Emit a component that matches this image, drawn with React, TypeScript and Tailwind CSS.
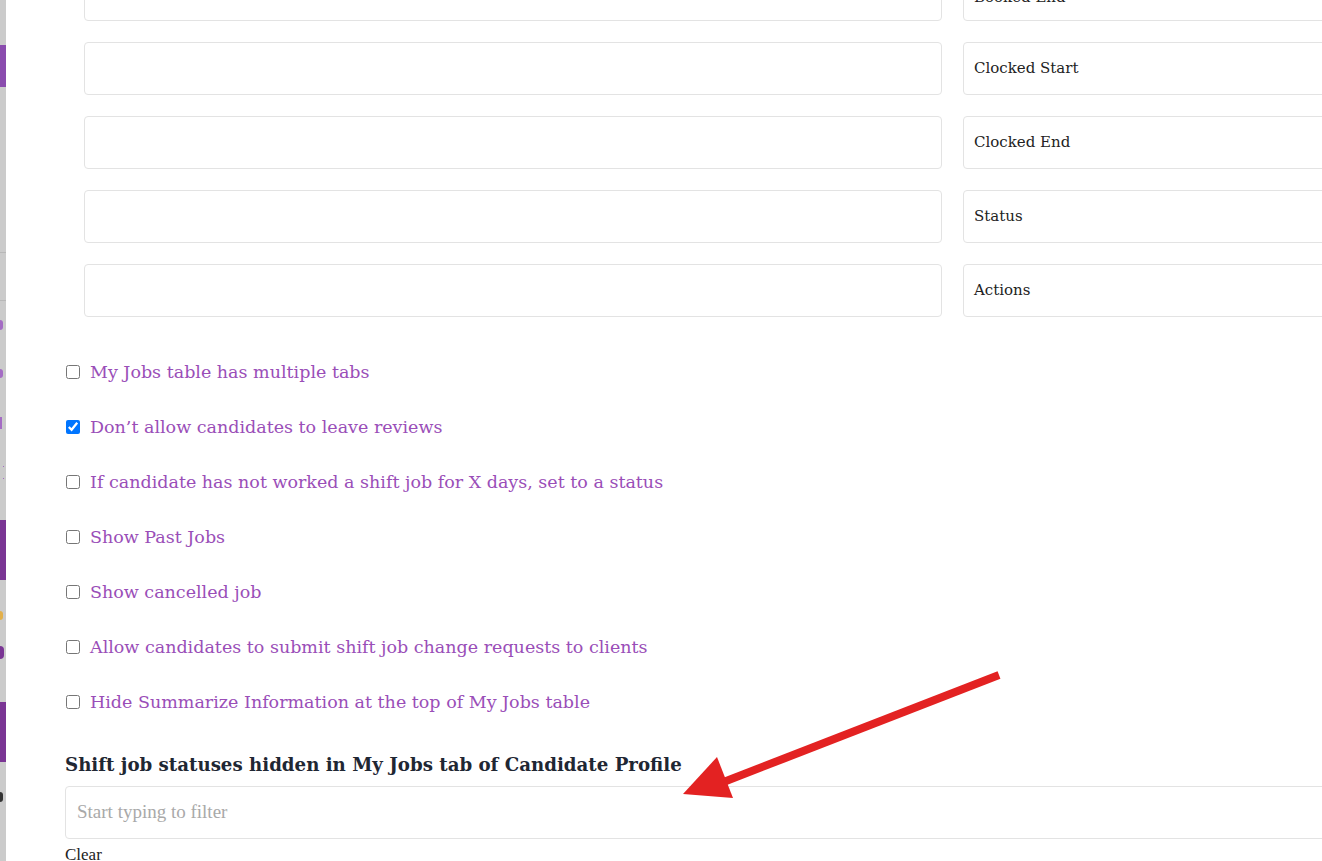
import React from "react";

const rightLabels = ["Booked End", "Clocked Start", "Clocked End", "Status", "Actions"];

const checks = [
  { label: "My Jobs table has multiple tabs", checked: false },
  { label: "Don’t allow candidates to leave reviews", checked: true },
  { label: "If candidate has not worked a shift job for X days, set to a status", checked: false },
  { label: "Show Past Jobs", checked: false },
  { label: "Show cancelled job", checked: false },
  { label: "Allow candidates to submit shift job change requests to clients", checked: false },
  { label: "Hide Summarize Information at the top of My Jobs table", checked: false },
];

const serif = { fontFamily: '"DejaVu Serif", Georgia, serif' };
const times = { fontFamily: '"Liberation Serif", "Times New Roman", serif' };

export default function App() {
  return (
    <div className="flex h-[861px] w-[1322px] overflow-hidden bg-white" style={serif}>
      {/* dimmed page strip on the left */}
      <div className="flex h-full w-[6px] shrink-0 flex-col overflow-hidden bg-[#cbcbcb]">
        <div className="mt-[45px] h-[42px] w-full shrink-0 bg-[#8a4cae]" />
        <div className="mt-[165px] h-px w-full shrink-0 bg-[#b8b8b8]" />
        <div className="mt-[47px] h-px w-full shrink-0 bg-[#b8b8b8]" />
        <div className="mt-[19px] h-[10px] w-[3px] shrink-0 rounded-r-full bg-[#a46cc4]" />
        <div className="mt-[39px] h-[9px] w-[3px] shrink-0 rounded-r-full bg-[#a46cc4]" />
        <div className="mt-[39px] h-[12px] w-[2px] shrink-0 bg-[#a46cc4]" />
        <div className="mt-[37px] ml-[3px] h-px w-px shrink-0 bg-[#a46cc4]" />
        <div className="mt-[11px] ml-[3px] h-px w-px shrink-0 bg-[#a46cc4]" />
        <div className="mt-[41px] h-[60px] w-full shrink-0 bg-[#7a3594]" />
        <div className="mt-[31px] h-[9px] w-[3px] shrink-0 rounded-r-full bg-[#e3b04a]" />
        <div className="mt-[26px] h-[13px] w-[4px] shrink-0 rounded-r-full bg-[#7a3594]" />
        <div className="mt-[43px] h-[60px] w-full shrink-0 bg-[#7a3594]" />
        <div className="mt-[30px] h-[10px] w-[3px] shrink-0 rounded-r-full bg-[#333]" />
      </div>

      {/* main panel */}
      <div className="relative flex-1 overflow-hidden">
        <div className="mt-[-32px] flex flex-col gap-[21px] pl-[78px]">
          {rightLabels.map((l, i) => (
            <div key={l} className="flex gap-[21px]">
              <div className="h-[53px] w-[858px] shrink-0 rounded-[4px] border border-[#e3e3e3] bg-white" />
              <div
                className={
                  "flex h-[53px] w-[420px] shrink-0 items-center rounded-[4px] border border-[#e3e3e3] bg-white pl-[10px] text-[15px] text-[#222] " +
                  (i === 0 ? "pt-[6px]" : "")
                }
              >
                {l}
              </div>
            </div>
          ))}
        </div>

        <div className="mt-[45px] flex flex-col gap-[35px] pl-[60px]">
          {checks.map((c) => (
            <label key={c.label} className="flex h-[20px] items-center gap-[10px]">
              <input
                type="checkbox"
                defaultChecked={c.checked}
                className="m-0 h-[14px] w-[14px] shrink-0"
              />
              <span className="text-[17.5px] leading-[20px] text-[#9a4eb8]">{c.label}</span>
            </label>
          ))}
        </div>

        <div className="mt-[42px] pl-[59px] text-[18.2px] font-bold leading-[22px] text-[#1f2733]">
          Shift job statuses hidden in My Jobs tab of Candidate Profile
        </div>
        <div className="mt-[10px] ml-[59px] flex h-[53px] w-[1300px] items-center rounded-[4px] border border-[#e3e3e3] pl-[11px]">
          <span className="text-[19px] text-[#a9a9a9]" style={times}>
            Start typing to filter
          </span>
        </div>
        <div className="mt-[5px] pl-[59px] text-[17px] leading-[22px] text-[#222]" style={times}>
          Clear
        </div>

        {/* red annotation arrow */}
        <svg
          className="pointer-events-none absolute left-0 top-0"
          width="1316"
          height="861"
          viewBox="0 0 1316 861"
        >
          <line x1="993" y1="675" x2="715" y2="783" stroke="#e32222" strokeWidth="8" />
          <polygon points="677,794 711,757 727,798" fill="#e32222" />
        </svg>
      </div>
    </div>
  );
}
